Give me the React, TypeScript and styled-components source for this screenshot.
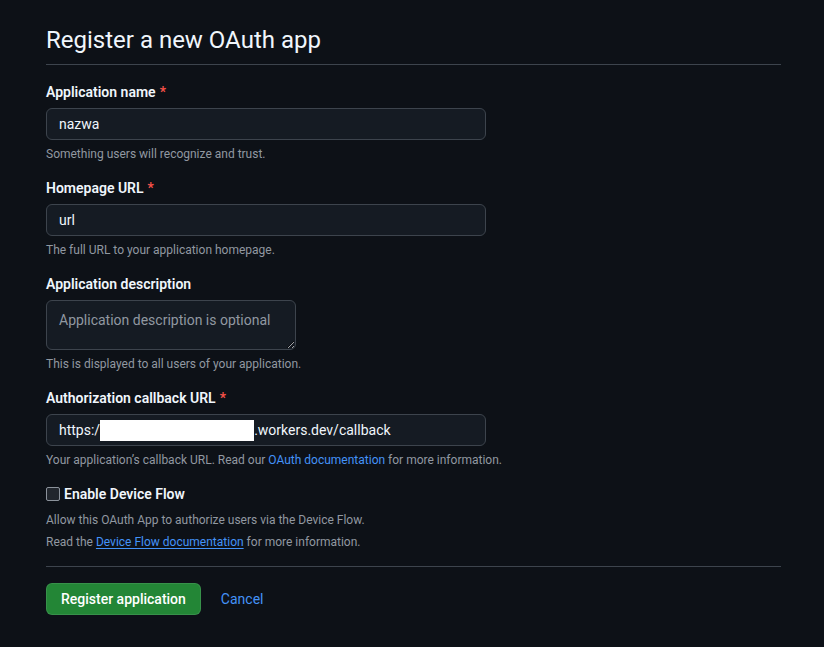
import React from "react";
import styled, { createGlobalStyle } from "styled-components";

const FONT = `"Roboto", "Noto Sans", sans-serif`;

const Global = createGlobalStyle`
  html, body {
    margin: 0;
    padding: 0;
    background: #0d1117;
    color-scheme: dark;
  }
  body {
    font-family: ${FONT};
    color: #f0f6fc;
    font-size: 14px;
  }
`;

const Page = styled.div`
  min-height: 647px;
  padding: 22px 43px 0 46px;
  box-sizing: border-box;
`;

const Container = styled.div`
  width: 735px;
`;

const Heading = styled.h1`
  margin: 0;
  font-size: 24px;
  line-height: 36px;
  font-weight: 400;
  padding-bottom: 6px;
  border-bottom: 1px solid #3d444d;
  color: #f0f6fc;
`;

const Form = styled.form`
  display: flex;
  flex-direction: column;
  padding-top: 17px;
`;

const Group = styled.div<{ $last?: boolean }>`
  display: flex;
  flex-direction: column;
  margin-bottom: ${(p) => (p.$last ? 0 : 15)}px;
`;

const Label = styled.label`
  font-weight: 600;
  font-size: 14px;
  line-height: 20px;
  margin-bottom: 6px;
  color: #f0f6fc;
`;

const Required = styled.span`
  color: #f85149;
  margin-left: 4px;
`;

const fieldBase = `
  box-sizing: border-box;
  background: #151b23;
  border: 1px solid #3d444d;
  border-radius: 6px;
  color: #f0f6fc;
  font-family: ${FONT};
  font-size: 14px;
  outline: none;
`;

const TextInput = styled.input`
  ${fieldBase}
  width: 440px;
  height: 32px;
  padding: 0 12px;
`;

const FakeInput = styled.div`
  ${fieldBase}
  width: 440px;
  height: 32px;
  padding: 0 12px;
  display: flex;
  align-items: center;
  white-space: pre;
`;

const Redacted = styled.span`
  display: inline-block;
  width: 154px;
  height: 21px;
  background: #ffffff;
`;

const TextArea = styled.textarea`
  ${fieldBase}
  display: block;
  width: 250px;
  height: 50px;
  padding: 9px 12px;
  line-height: 20px;
  resize: both;
  &::placeholder {
    color: #9198a1;
  }
`;

const Note = styled.p<{ $gap?: number }>`
  margin: ${(p) => p.$gap ?? 5}px 0 0;
  font-size: 12px;
  line-height: 18px;
  color: #9198a1;
`;

const Link = styled.a<{ $underline?: boolean }>`
  color: #4493f8;
  text-decoration: ${(p) => (p.$underline ? "underline" : "none")};
  text-underline-offset: 2px;
`;

const CheckRow = styled.label`
  display: flex;
  align-items: center;
  gap: 4px;
  font-weight: 600;
  font-size: 14px;
  line-height: 20px;
  color: #f0f6fc;
`;

const Box = styled.span`
  box-sizing: border-box;
  width: 14px;
  height: 14px;
  border: 1px solid #8b929b;
  border-radius: 2px;
  background: #21262d;
`;

const Divider = styled.hr`
  border: 0;
  border-top: 1px solid #3d444d;
  margin: 15px 0 16px;
`;

const Actions = styled.div`
  display: flex;
  align-items: center;
  gap: 20px;
`;

const PrimaryButton = styled.button`
  height: 32px;
  padding: 0 14px;
  background: #238636;
  border: 1px solid rgba(240, 246, 252, 0.1);
  border-radius: 6px;
  color: #ffffff;
  font-family: ${FONT};
  font-size: 14px;
  font-weight: 500;
  cursor: pointer;
`;

export default function App() {
  return (
    <>
      <Global />
      <Page>
        <Container>
          <Heading>Register a new OAuth app</Heading>
          <Form onSubmit={(e) => e.preventDefault()}>
            <Group>
              <Label>
                Application name<Required>*</Required>
              </Label>
              <TextInput defaultValue="nazwa" />
              <Note>Something users will recognize and trust.</Note>
            </Group>
            <Group>
              <Label>
                Homepage URL<Required>*</Required>
              </Label>
              <TextInput defaultValue="url" />
              <Note>The full URL to your application homepage.</Note>
            </Group>
            <Group>
              <Label>Application description</Label>
              <TextArea placeholder="Application description is optional" />
              <Note>This is displayed to all users of your application.</Note>
            </Group>
            <Group>
              <Label>
                Authorization callback URL<Required>*</Required>
              </Label>
              <FakeInput>
                https:/<Redacted />.workers.dev/callback
              </FakeInput>
              <Note>
                Your application’s callback URL. Read our{" "}
                <Link href="#">OAuth documentation</Link> for more information.
              </Note>
            </Group>
            <Group $last>
              <CheckRow>
                <Box />
                Enable Device Flow
              </CheckRow>
              <Note $gap={7}>Allow this OAuth App to authorize users via the Device Flow.</Note>
              <Note $gap={4}>
                Read the{" "}
                <Link href="#" $underline>
                  Device Flow documentation
                </Link>{" "}
                for more information.
              </Note>
            </Group>
            <Divider />
            <Actions>
              <PrimaryButton type="submit">Register application</PrimaryButton>
              <Link href="#">Cancel</Link>
            </Actions>
          </Form>
        </Container>
      </Page>
    </>
  );
}
